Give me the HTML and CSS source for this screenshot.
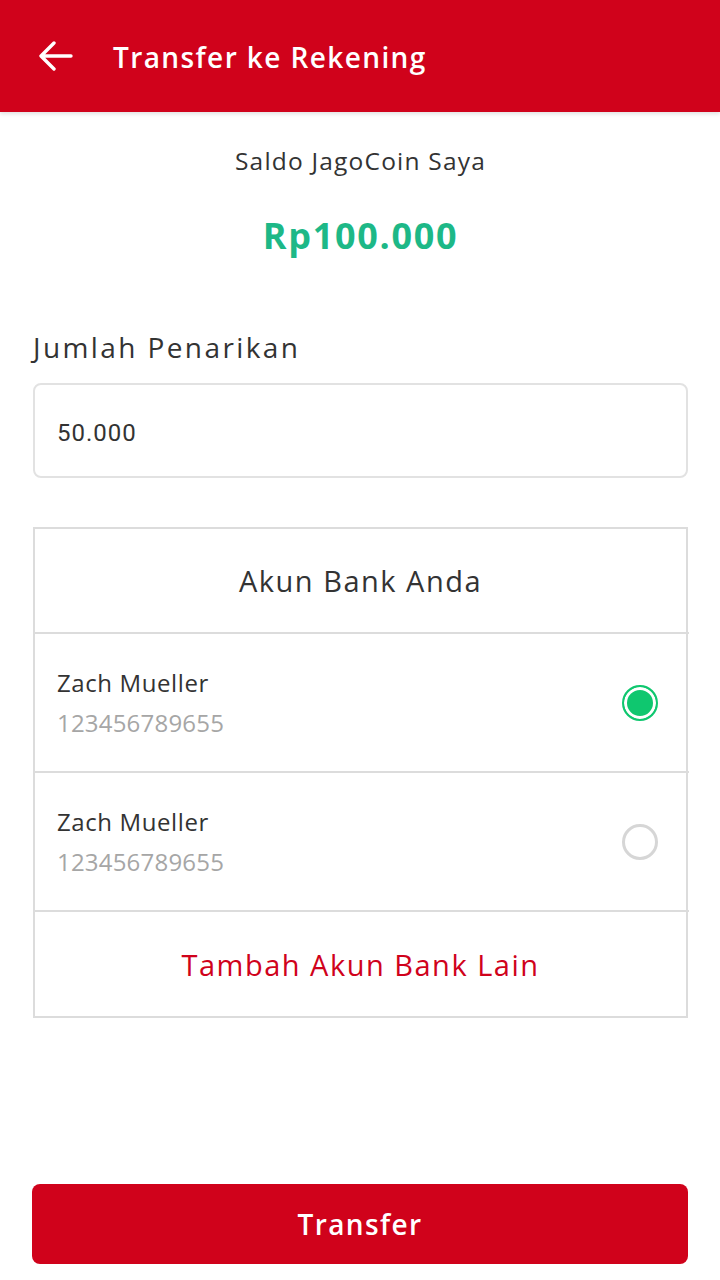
FILE: index.html
```html
<!DOCTYPE html>
<html lang="id">
<head>
<meta charset="utf-8">
<title>Transfer ke Rekening</title>
<link rel="stylesheet" href="styles.css">
</head>
<body>
<div class="app">
  <header class="topbar">
    <svg class="back" width="34" height="30" viewBox="0 0 34 30" aria-hidden="true">
      <path d="M32 15H3M15 2L2 15l13 13" fill="none" stroke="#fff" stroke-width="3.4" stroke-linecap="round" stroke-linejoin="round"/>
    </svg>
    <h1 class="title">Transfer ke Rekening</h1>
  </header>

  <main class="content">
    <section class="balance">
      <p class="balance-label">Saldo JagoCoin Saya</p>
      <p class="balance-value">Rp100.000</p>
    </section>

    <section class="amount">
      <label class="amount-label">Jumlah Penarikan</label>
      <div class="amount-input">50.000</div>
    </section>

    <section class="banks">
      <div class="banks-head">Akun Bank Anda</div>
      <div class="bank-row">
        <div class="bank-info">
          <div class="bank-name">Zach Mueller</div>
          <div class="bank-num">123456789655</div>
        </div>
        <span class="radio radio-on"></span>
      </div>
      <div class="bank-row">
        <div class="bank-info">
          <div class="bank-name">Zach Mueller</div>
          <div class="bank-num">123456789655</div>
        </div>
        <span class="radio"></span>
      </div>
      <div class="banks-add">Tambah Akun Bank Lain</div>
    </section>
  </main>

  <footer class="actions">
    <button class="btn">Transfer</button>
  </footer>
</div>
</body>
</html>
```

FILE: styles.css
```css
* { box-sizing: border-box; }
html, body { margin: 0; padding: 0; background: #fff; }
body {
  font-family: "Open Sans", "Noto Sans", sans-serif;
  color: #333;
}
.app {
  min-height: 1280px;
  display: flex;
  flex-direction: column;
}
.topbar {
  height: 112px;
  background: #d0021b;
  display: flex;
  align-items: center;
  padding-left: 39px;
  box-shadow: 0 2px 4px rgba(0,0,0,0.12);
}
.back { display: block; margin-top: -1px; }
.title {
  margin: 0 0 0 40px;
  color: #fff;
  font-size: 28px;
  line-height: 36px;
  font-weight: 600;
  letter-spacing: 1.4px;
  padding-top: 2px;
}
.content {
  padding: 0 32px 0 33px;
}
.balance {
  text-align: center;
  padding-top: 33px;
}
.balance-label {
  margin: 0;
  font-size: 24.5px;
  line-height: 32px;
  letter-spacing: 1.2px;
}
.balance-value {
  margin: 38px 0 0;
  font-size: 36px;
  line-height: 42px;
  font-weight: 700;
  letter-spacing: 1.7px;
  color: #1db887;
}
.amount { padding-top: 72px; }
.amount-label {
  display: block;
  font-size: 28px;
  line-height: 36px;
  letter-spacing: 2.4px;
}
.amount-input {
  margin-top: 18px;
  height: 95px;
  border: 2px solid #e2e2e2;
  border-radius: 8px;
  padding: 4px 22px 0;
  display: flex;
  align-items: center;
  font-family: Roboto, "Open Sans", sans-serif;
  font-size: 24px;
  letter-spacing: 1px;
  color: #333;
}
.banks {
  margin-top: 49px;
  border: 2px solid #dcdcdc;
}
.banks-head {
  height: 105px;
  display: flex;
  align-items: center;
  justify-content: center;
  font-size: 29px;
  letter-spacing: 1.5px;
  border-bottom: 2px solid #dcdcdc;
  margin-right: -3px;
  padding-right: 3px;
}
.bank-row {
  height: 139px;
  display: flex;
  align-items: center;
  justify-content: space-between;
  padding: 0 28px 0 22px;
  border-bottom: 2px solid #dcdcdc;
  margin-right: -3px;
}
.bank-name {
  font-size: 24px;
  line-height: 30px;
  letter-spacing: 0.6px;
  color: #333;
}
.bank-num {
  margin-top: 10px;
  font-size: 24px;
  line-height: 30px;
  letter-spacing: 0.2px;
  color: #a6a6a6;
}
.radio {
  width: 36px;
  height: 36px;
  border-radius: 50%;
  border: 3px solid #d6d6d6;
  display: block;
  margin-right: 3px;
}
.radio-on {
  border: 2px solid #0fc76f;
  background: #0fc76f;
  box-shadow: inset 0 0 0 3px #fff;
}
.banks-add {
  height: 104px;
  display: flex;
  align-items: center;
  justify-content: center;
  font-size: 29px;
  color: #d0021b;
  letter-spacing: 1.5px;
}
.actions {
  margin-top: auto;
  padding: 0 32px 16px;
}
.btn {
  width: 100%;
  height: 80px;
  border: none;
  border-radius: 8px;
  background: #d0021b;
  color: #fff;
  font-family: inherit;
  font-size: 28px;
  font-weight: 600;
  letter-spacing: 1.4px;
  cursor: pointer;
}
```
